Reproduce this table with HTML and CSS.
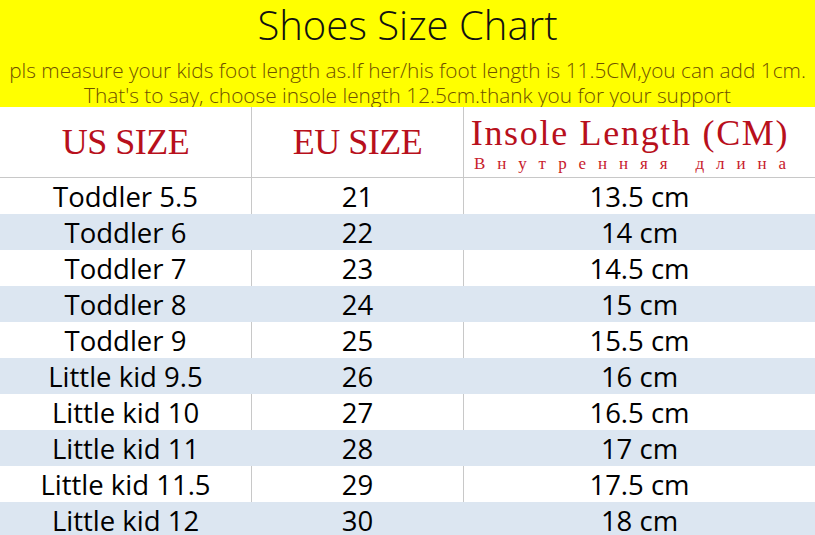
FILE: index.html
```html
<!DOCTYPE html>
<html>
<head>
<meta charset="utf-8">
<link rel="stylesheet" href="styles.css">
</head>
<body>
<div class="page">
  <header class="banner">
    <h1 class="title">Shoes Size Chart</h1>
    <p class="note">pls measure your kids foot length as.If her/his foot length is 11.5CM,you can add 1cm.</p>
    <p class="note last">That's to say, choose insole length 12.5cm.thank you for your support</p>
  </header>
  <div class="chart">
    <div class="row head">
      <div class="cell"><span class="h-main">US SIZE</span></div>
      <div class="cell"><span class="h-main">EU SIZE</span></div>
      <div class="cell stack"><span class="h-main wide">Insole Length (CM)</span><span class="h-sub">Внутренняя длина</span></div>
    </div>
    <div class="row"><div class="cell">Toddler 5.5</div><div class="cell">21</div><div class="cell">13.5 cm</div></div>
    <div class="row alt"><div class="cell">Toddler 6</div><div class="cell">22</div><div class="cell">14 cm</div></div>
    <div class="row"><div class="cell">Toddler 7</div><div class="cell">23</div><div class="cell">14.5 cm</div></div>
    <div class="row alt"><div class="cell">Toddler 8</div><div class="cell">24</div><div class="cell">15 cm</div></div>
    <div class="row"><div class="cell">Toddler 9</div><div class="cell">25</div><div class="cell">15.5 cm</div></div>
    <div class="row alt"><div class="cell">Little kid 9.5</div><div class="cell">26</div><div class="cell">16 cm</div></div>
    <div class="row"><div class="cell">Little kid 10</div><div class="cell">27</div><div class="cell">16.5 cm</div></div>
    <div class="row alt"><div class="cell">Little kid 11</div><div class="cell">28</div><div class="cell">17 cm</div></div>
    <div class="row"><div class="cell">Little kid 11.5</div><div class="cell">29</div><div class="cell">17.5 cm</div></div>
    <div class="row alt"><div class="cell">Little kid 12</div><div class="cell">30</div><div class="cell">18 cm</div></div>
  </div>
</div>
</body>
</html>
```
FILE: styles.css
```css
* { box-sizing: border-box; margin: 0; padding: 0; }
html, body { width: 815px; height: 535px; overflow: hidden; background: #fff; }
body { font-family: "Open Sans", "Noto Sans", sans-serif; color: #000; }
.page { width: 815px; }
.banner {
  background: #ffff00;
  height: 107px;
  text-align: center;
}
.title {
  font-weight: 300;
  font-size: 40px;
  line-height: 50px;
  color: #111;
}
.note {
  font-weight: 300;
  font-size: 20.8px;
  line-height: 26px;
  color: #6e5000;
  white-space: nowrap;
  margin-top: 7px;
}
.note.last { margin-top: 0; line-height: 24px; }
.chart { display: flex; flex-direction: column; }
.row {
  display: grid;
  grid-template-columns: 251px 212px 352px;
  height: 36px;
  background: #fff;
}
.row.alt { background: #dce6f1; }
.row.head { height: 71px; border-bottom: 1px solid #c8c8c8; }
.cell {
  display: flex;
  align-items: center;
  justify-content: center;
  font-size: 27.5px;
  border-left: 1px solid #c8c8c8;
}
.cell:first-child { border-left: none; }
.row.alt .cell { border-left-color: transparent; }
.cell.stack {
  flex-direction: column;
  justify-content: flex-start;
  padding-top: 6px;
  padding-right: 19px;
}
.h-main {
  font-family: "Liberation Serif", serif;
  font-size: 36px;
  color: #b8101c;
  letter-spacing: -0.5px;
  line-height: 40px;
}
.h-main.wide { letter-spacing: 1.7px; }
.h-sub {
  font-family: "Liberation Serif", serif;
  font-size: 17px;
  color: #c8202c;
  letter-spacing: 11.9px;
  line-height: 22px;
  margin-right: -11.9px;
}
```
